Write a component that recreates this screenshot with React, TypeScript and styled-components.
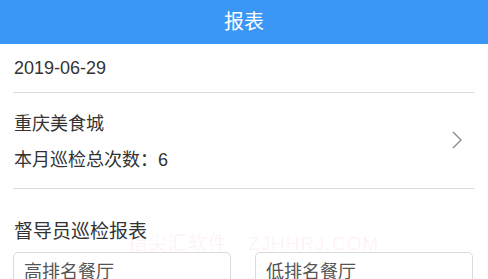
import React from 'react';
import styled, { createGlobalStyle } from 'styled-components';

const GlobalStyle = createGlobalStyle`
  html, body {
    margin: 0;
    padding: 0;
    background: #fff;
  }
  body {
    font-family: "Liberation Sans", "Noto Sans CJK SC", sans-serif;
    color: #333;
    overflow: hidden;
  }
`;

function App() {
  return (
    <Page>
      <GlobalStyle />
      <Header>报表</Header>
      <DateRow>2019-06-29</DateRow>
      <Divider />
      <StoreRow>
        <StoreInfo>
          <StoreLine>重庆美食城</StoreLine>
          <StoreLine>本月巡检总次数：6</StoreLine>
        </StoreInfo>
        <Chevron viewBox="0 0 10 18">
          <path d="M1 1 L9 9 L1 17" fill="none" stroke="#8a8a8a" strokeWidth="1.4" />
        </Chevron>
      </StoreRow>
      <Divider />
      <SectionTitle>督导员巡检报表</SectionTitle>
      <Cards>
        <Card>
          <CardTitle>高排名餐厅</CardTitle>
        </Card>
        <Card>
          <CardTitle>低排名餐厅</CardTitle>
        </Card>
      </Cards>
      <Watermark>指尖汇软件 · ZJHHRJ.COM</Watermark>
    </Page>
  );
}

const Page = styled.div`
  position: relative;
  width: 488px;
  height: 279px;
  overflow: hidden;
`;

const Header = styled.div`
  height: 44px;
  background-color: #3a97f6;
  color: #fff;
  font-size: 20px;
  display: flex;
  align-items: center;
  justify-content: center;
  padding-bottom: 4px;
  box-sizing: border-box;
`;

const DateRow = styled.div`
  height: 48px;
  display: flex;
  align-items: center;
  padding: 0 14px;
  font-size: 18px;
  color: #333;
`;

const Divider = styled.div`
  height: 1px;
  margin: 0 14px 0 13px;
  background-color: #dcdcdc;
`;

const StoreRow = styled.div`
  height: 95px;
  display: flex;
  align-items: center;
  justify-content: space-between;
  padding: 0 26px 0 14px;
`;

const StoreInfo = styled.div`
  display: flex;
  flex-direction: column;
  gap: 10px;
  padding-top: 3px;
`;

const StoreLine = styled.div`
  font-size: 18px;
  line-height: 26px;
  color: #333;
`;

const Chevron = styled.svg`
  width: 10px;
  height: 18px;
  margin-top: -2px;
`;

const SectionTitle = styled.div`
  font-size: 19px;
  color: #333;
  padding: 30px 14px 0;
  line-height: 26px;
`;

const Cards = styled.div`
  display: grid;
  grid-template-columns: 1fr 1fr;
  gap: 24px;
  padding: 7px 15px 0 13px;
`;

const Card = styled.div`
  height: 60px;
  border: 1px solid #dadada;
  border-radius: 5px;
  padding: 8px 10px;
  box-sizing: border-box;
`;

const CardTitle = styled.div`
  font-size: 18px;
  line-height: 22px;
  color: #555;
`;

const Watermark = styled.div`
  position: absolute;
  left: 128px;
  top: 228px;
  font-size: 19px;
  letter-spacing: 1px;
  color: rgba(255, 60, 140, 0.07);
  pointer-events: none;
  white-space: nowrap;
`;

export default App;
